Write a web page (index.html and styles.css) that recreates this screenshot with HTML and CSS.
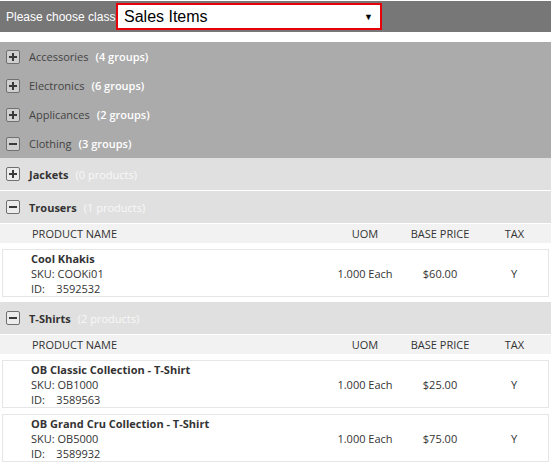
FILE: index.html
```html
<!DOCTYPE html>
<html>
<head>
<meta charset="utf-8">
<link rel="stylesheet" href="styles.css">
</head>
<body>
<div class="topbar">
  <span class="label">Please choose class</span>
  <div class="select"><span>Sales Items</span><span class="arrow">&#9660;</span></div>
</div>

<div class="cats">
  <div class="cat"><span class="tog plus"></span><span class="name">Accessories</span><span class="count">(4 groups)</span></div>
  <div class="cat"><span class="tog plus"></span><span class="name">Electronics</span><span class="count">(6 groups)</span></div>
  <div class="cat"><span class="tog plus"></span><span class="name">Applicances</span><span class="count">(2 groups)</span></div>
  <div class="cat"><span class="tog minus"></span><span class="name">Clothing</span><span class="count">(3 groups)</span></div>
</div>

<div class="grp"><span class="tog plus"></span><span class="name">Jackets</span><span class="count">(0 products)</span></div>

<div class="grp"><span class="tog minus"></span><span class="name">Trousers</span><span class="count">(1 products)</span></div>
<div class="thead"><span class="c-name">PRODUCT NAME</span><span class="c">UOM</span><span class="c">BASE PRICE</span><span class="c">TAX</span></div>
<div class="plist">
  <div class="prod">
    <div class="c-name"><b>Cool Khakis</b><br>SKU: COOKi01<br>ID:&nbsp;&nbsp;&nbsp; 3592532</div>
    <div class="c">1.000 Each</div><div class="c">$60.00</div><div class="c">Y</div>
  </div>
</div>

<div class="grp"><span class="tog minus"></span><span class="name">T-Shirts</span><span class="count">(2 products)</span></div>
<div class="thead"><span class="c-name">PRODUCT NAME</span><span class="c">UOM</span><span class="c">BASE PRICE</span><span class="c">TAX</span></div>
<div class="plist">
  <div class="prod">
    <div class="c-name"><b>OB Classic Collection - T-Shirt</b><br>SKU: OB1000<br>ID:&nbsp;&nbsp;&nbsp; 3589563</div>
    <div class="c">1.000 Each</div><div class="c">$25.00</div><div class="c">Y</div>
  </div>
  <div class="prod">
    <div class="c-name"><b>OB Grand Cru Collection - T-Shirt</b><br>SKU: OB5000<br>ID:&nbsp;&nbsp;&nbsp; 3589932</div>
    <div class="c">1.000 Each</div><div class="c">$75.00</div><div class="c">Y</div>
  </div>
</div>
</body>
</html>
```
FILE: styles.css
```css
html, body { margin: 0; padding: 0; background: #fff; }
body { padding-top: 1px; font-family: "Open Sans", "Liberation Sans", sans-serif; font-size: 11px; color: #333; }

.topbar { background: #777; height: 31px; display: flex; align-items: center; padding-left: 6px; }
.topbar .label { color: #fff; font-family: "Liberation Sans", Arial, sans-serif; font-size: 12px; width: 110px; flex: none; white-space: nowrap; }
.select { width: 249px; height: 23px; border: 2px solid #e5000a; background: #fff; display: flex; align-items: center; justify-content: space-between; padding: 0 7px 0 6px; box-sizing: content-box; flex: none; }
.select span { font-family: "Liberation Sans", Arial, sans-serif; font-size: 16px; color: #000; }
.select .arrow { font-size: 9px; }

.cats { margin-top: 10px; background: #ababab; }
.cat { height: 29px; display: flex; align-items: center; padding-left: 6px; }
.cat .name { color: #444; margin-left: 9px; }
.cat .count { color: #fff; font-weight: 600; margin-left: 7px; }

.grp { height: 32px; background: #e0e0e0; border-bottom: 1px solid #fff; display: flex; align-items: center; padding-left: 6px; }
.grp .name { color: #333; font-weight: 700; margin-left: 9px; }
.grp .count { color: #f8f8f8; margin-left: 7px; }

.tog { width: 12px; height: 12px; border: 1px solid #707070; border-radius: 2px; background: #cfcfcf; position: relative; flex: none; }
.grp .tog { background: #ececec; }
.tog::before { content: ""; position: absolute; left: 2px; top: 5px; width: 8px; height: 2px; background: #3a3a3a; }
.tog.plus::after { content: ""; position: absolute; left: 5px; top: 2px; width: 2px; height: 8px; background: #3a3a3a; }

.thead { background: #f2f2f2; height: 19px; display: grid; grid-template-columns: 1fr 70px 80px 69px; align-items: center; padding: 0 2px; color: #333; }
.thead .c-name { padding-left: 30px; }
.c { text-align: center; }

.plist { display: flex; flex-direction: column; gap: 6px; padding: 6px 2px 5px; }
.prod { border: 1px solid #e6e6e6; background: #fff; height: 46px; display: grid; grid-template-columns: 1fr 70px 80px 68px; align-items: center; }
.prod .c-name { padding-left: 28px; line-height: 15px; }
.prod b { font-weight: 700; }
```
